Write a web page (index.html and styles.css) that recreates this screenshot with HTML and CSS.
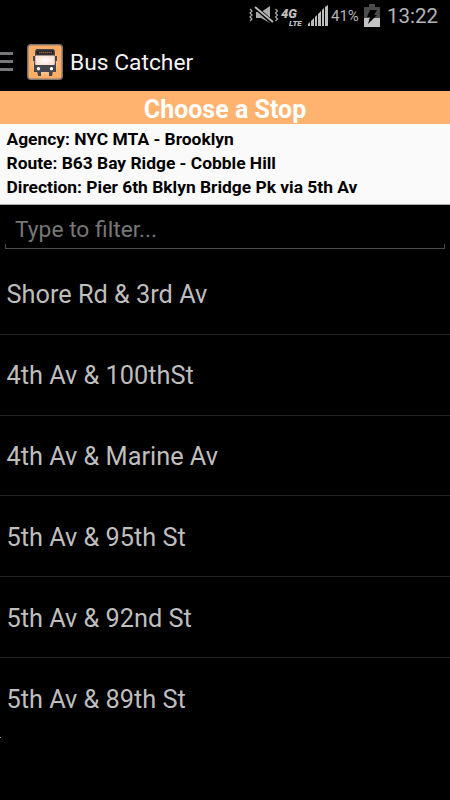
FILE: index.html
```
<!DOCTYPE html>
<html lang="en">
  <head>
    <meta charset="UTF-8" />
    <meta name="viewport" content="width=device-width, initial-scale=1.0" />
    <title>Bus Catcher</title>
    <link rel="stylesheet" href="styles.css">
  </head>
  <body>
    <div class="status-bar">
      <svg class="mute-icon" width="30" height="20" viewBox="0 0 30 20">
        <g fill="none" stroke="#aaa" stroke-width="1.2">
          <path d="M1 4l2 2-2 2 2 2-2 2 2 2-2 2" />
          <path d="M26.500 4l2 2-2 2 2 2-2 2 2 2-2 2" />
        </g>
        <path d="M7 7h5l9-6v17l-9-5H7z" fill="#aaa" />
        <path d="M6 2l18 16" stroke="#000" stroke-width="4" />
        <path d="M6 2l18 15" stroke="#bbb" stroke-width="1.8" />
      </svg>
      <div class="network">
        <span class="network-4g">4G</span>
        <span class="network-lte">LTE</span>
      </div>
      <svg class="signal-icon" width="20" height="21" viewBox="0 0 20 21">
        <path d="M0 21v-2l2-2v4zM3 21v-5l3-3v8zM7 21v-9l2-2v11zM10 21V9l3-3v15zM14 21V5l2-2v18zM17 21V2l3-2v21z" fill="#bebebe" />
      </svg>
      <span class="battery-level">41%</span>
      <svg class="battery-icon" width="16" height="23" viewBox="0 0 16 23">
        <path d="M5 0h6v3h5v20H0V3h5z" fill="#4b4b4b" />
        <path d="M0 14h16v9H0z" fill="#c4c4c4" />
        <path d="M6 6h7l-3 5h3L4 20l2-7H3z" fill="#000" />
      </svg>
      <span class="clock">13:22</span>
    </div>

    <div class="action-bar">
      <div class="menu-icon"><i></i><i></i><i></i></div>
      <svg class="app-icon" width="36" height="36" viewBox="0 0 36 36">
        <defs>
          <radialGradient id="glow">
            <stop offset="0" stop-color="#fff" />
            <stop offset=".5" stop-color="#ffe4c6" />
            <stop offset="1" stop-color="#fdac65" />
          </radialGradient>
          <radialGradient id="glass">
            <stop offset="0" stop-color="#fff" />
            <stop offset="1" stop-color="#fce0d0" />
          </radialGradient>
        </defs>
        <rect x=".8" y=".8" width="34.4" height="34.4" rx="3" fill="#fdac65" stroke="#7d7671" stroke-width="1.5" />
        <rect x="3" y="4" width="30" height="29" rx="6" fill="url(#glow)" opacity=".75" />
        <path d="M10 5h16q2 0 2 4v3l1 7v9H7v-9l1-7V9q0-4 2-4z" fill="#43454b" />
        <path d="M6 12h2v5H6zM28 12h2v5h-2zM10 27h4v5h-3zM22 27h4l-1 5h-3z" fill="#43454b" />
        <rect x="9.500" y="6.500" width="17" height="4" rx="1" fill="#202126" />
        <path d="M12 8.500h13" stroke="#9a6438" stroke-width="1.300" stroke-dasharray="1.500 .5" />
        <rect x="8.200" y="11.500" width="19.600" height="9.500" rx="1" fill="url(#glass)" />
        <circle cx="11.500" cy="24.800" r="1.700" fill="#fff" />
        <circle cx="24.500" cy="24.800" r="1.700" fill="#fff" />
      </svg>
      <h1 class="app-name">Bus Catcher</h1>
    </div>

    <h2 class="page-title">Choose a Stop</h2>

    <div class="trip-info">
      <p class="agency">Agency: NYC MTA - Brooklyn</p>
      <p class="route">Route: B63 Bay Ridge - Cobble Hill</p>
      <p class="direction">Direction: Pier 6th Bklyn Bridge Pk via 5th Av</p>
    </div>

    <div class="filter">
      <input class="filter-input" type="text" placeholder="Type to filter..." />
    </div>

    <ul class="stops">
      <li>Shore Rd &amp; 3rd Av</li>
      <li>4th Av &amp; 100thSt</li>
      <li>4th Av &amp; Marine Av</li>
      <li>5th Av &amp; 95th St</li>
      <li>5th Av &amp; 92nd St</li>
      <li>5th Av &amp; 89th St</li>
    </ul>
    <div class="list-end"></div>
  </body>
</html>
```
FILE: styles.css
```
* {
  margin: 0;
  padding: 0;
  box-sizing: border-box;
}

body {
  height: 800px;
  overflow: hidden;
  background-color: #000;
  font-family: Roboto, sans-serif;
}

.status-bar {
  height: 32px;
  display: flex;
  align-items: flex-start;
  justify-content: flex-end;
  padding-right: 12px;
  color: #b4b4b4;
}

.mute-icon {
  margin-top: 5px;
}

.network {
  width: 23px;
  height: 20px;
  margin: 9px 0 0 2px;
  font-style: italic;
  font-weight: 900;
  color: #bebebe;
}

.network span {
  display: block;
}

.network-4g {
  font-size: 13px;
  line-height: 10px;
}

.network-lte {
  font-size: 8px;
  line-height: 10px;
  padding-left: 8px;
}

.signal-icon {
  margin: 5px 0 0 4px;
}

.battery-level {
  width: 28px;
  margin: 7px 0 0 3px;
  font-size: 15px;
  line-height: 18px;
}

.battery-icon {
  margin: 4px 0 0 5px;
}

.clock {
  width: 51px;
  margin: 4px 0 0 7px;
  font-size: 20.5px;
  line-height: 25px;
}

.action-bar {
  height: 59px;
  display: flex;
  align-items: center;
}

.menu-icon {
  width: 13px;
  height: 19px;
  display: flex;
  flex-direction: column;
  justify-content: space-between;
}

.menu-icon i {
  height: 3px;
  background-color: #77777b;
}

.app-icon {
  margin: 0 7px 0 14px;
}

.app-name {
  padding-top: 2px;
  font-size: 22.8px;
  font-weight: normal;
  line-height: 30px;
  color: #f3f3f3;
}

.page-title {
  height: 33px;
  background-color: #ffb36e;
  color: #fff;
  font-size: 25px;
  line-height: 37px;
  text-align: center;
}

.trip-info {
  height: 81px;
  padding: 4px 6.5px 0;
  background-color: #fafafa;
  border-bottom: 1px solid #aaa;
  color: #000;
  font-size: 17.4px;
  font-weight: bold;
  line-height: 23.8px;
  white-space: nowrap;
}

.filter {
  height: 49px;
  padding: 5px 5px 0;
}

.filter-input {
  display: block;
  width: 100%;
  height: 39px;
  padding: 0 10px;
  border: none;
  outline: none;
  /* underline with a short upturned tick at each end */
  background: linear-gradient(#4d4d4d, #4d4d4d) left bottom / 100% 1px no-repeat,
    linear-gradient(#4d4d4d, #4d4d4d) left bottom / 1px 5px no-repeat,
    linear-gradient(#4d4d4d, #4d4d4d) right bottom / 1px 5px no-repeat;
  color: #bebebe;
  font-family: Roboto, sans-serif;
  font-size: 22.8px;
}

.filter-input::placeholder {
  color: #777;
}

.stops {
  list-style: none;
}

.stops li {
  height: 80.8px;
  padding-left: 6.5px;
  border-bottom: 1px solid #222;
  color: #bebebe;
  font-size: 25.3px;
  line-height: 81px;
}

.stops li:nth-child(n + 4) {
  line-height: 83px;
}

.stops li:last-child {
  height: 79px;
  border-bottom: none;
}

.list-end {
  width: 1px;
  height: 1px;
  background-color: #999;
}
```
